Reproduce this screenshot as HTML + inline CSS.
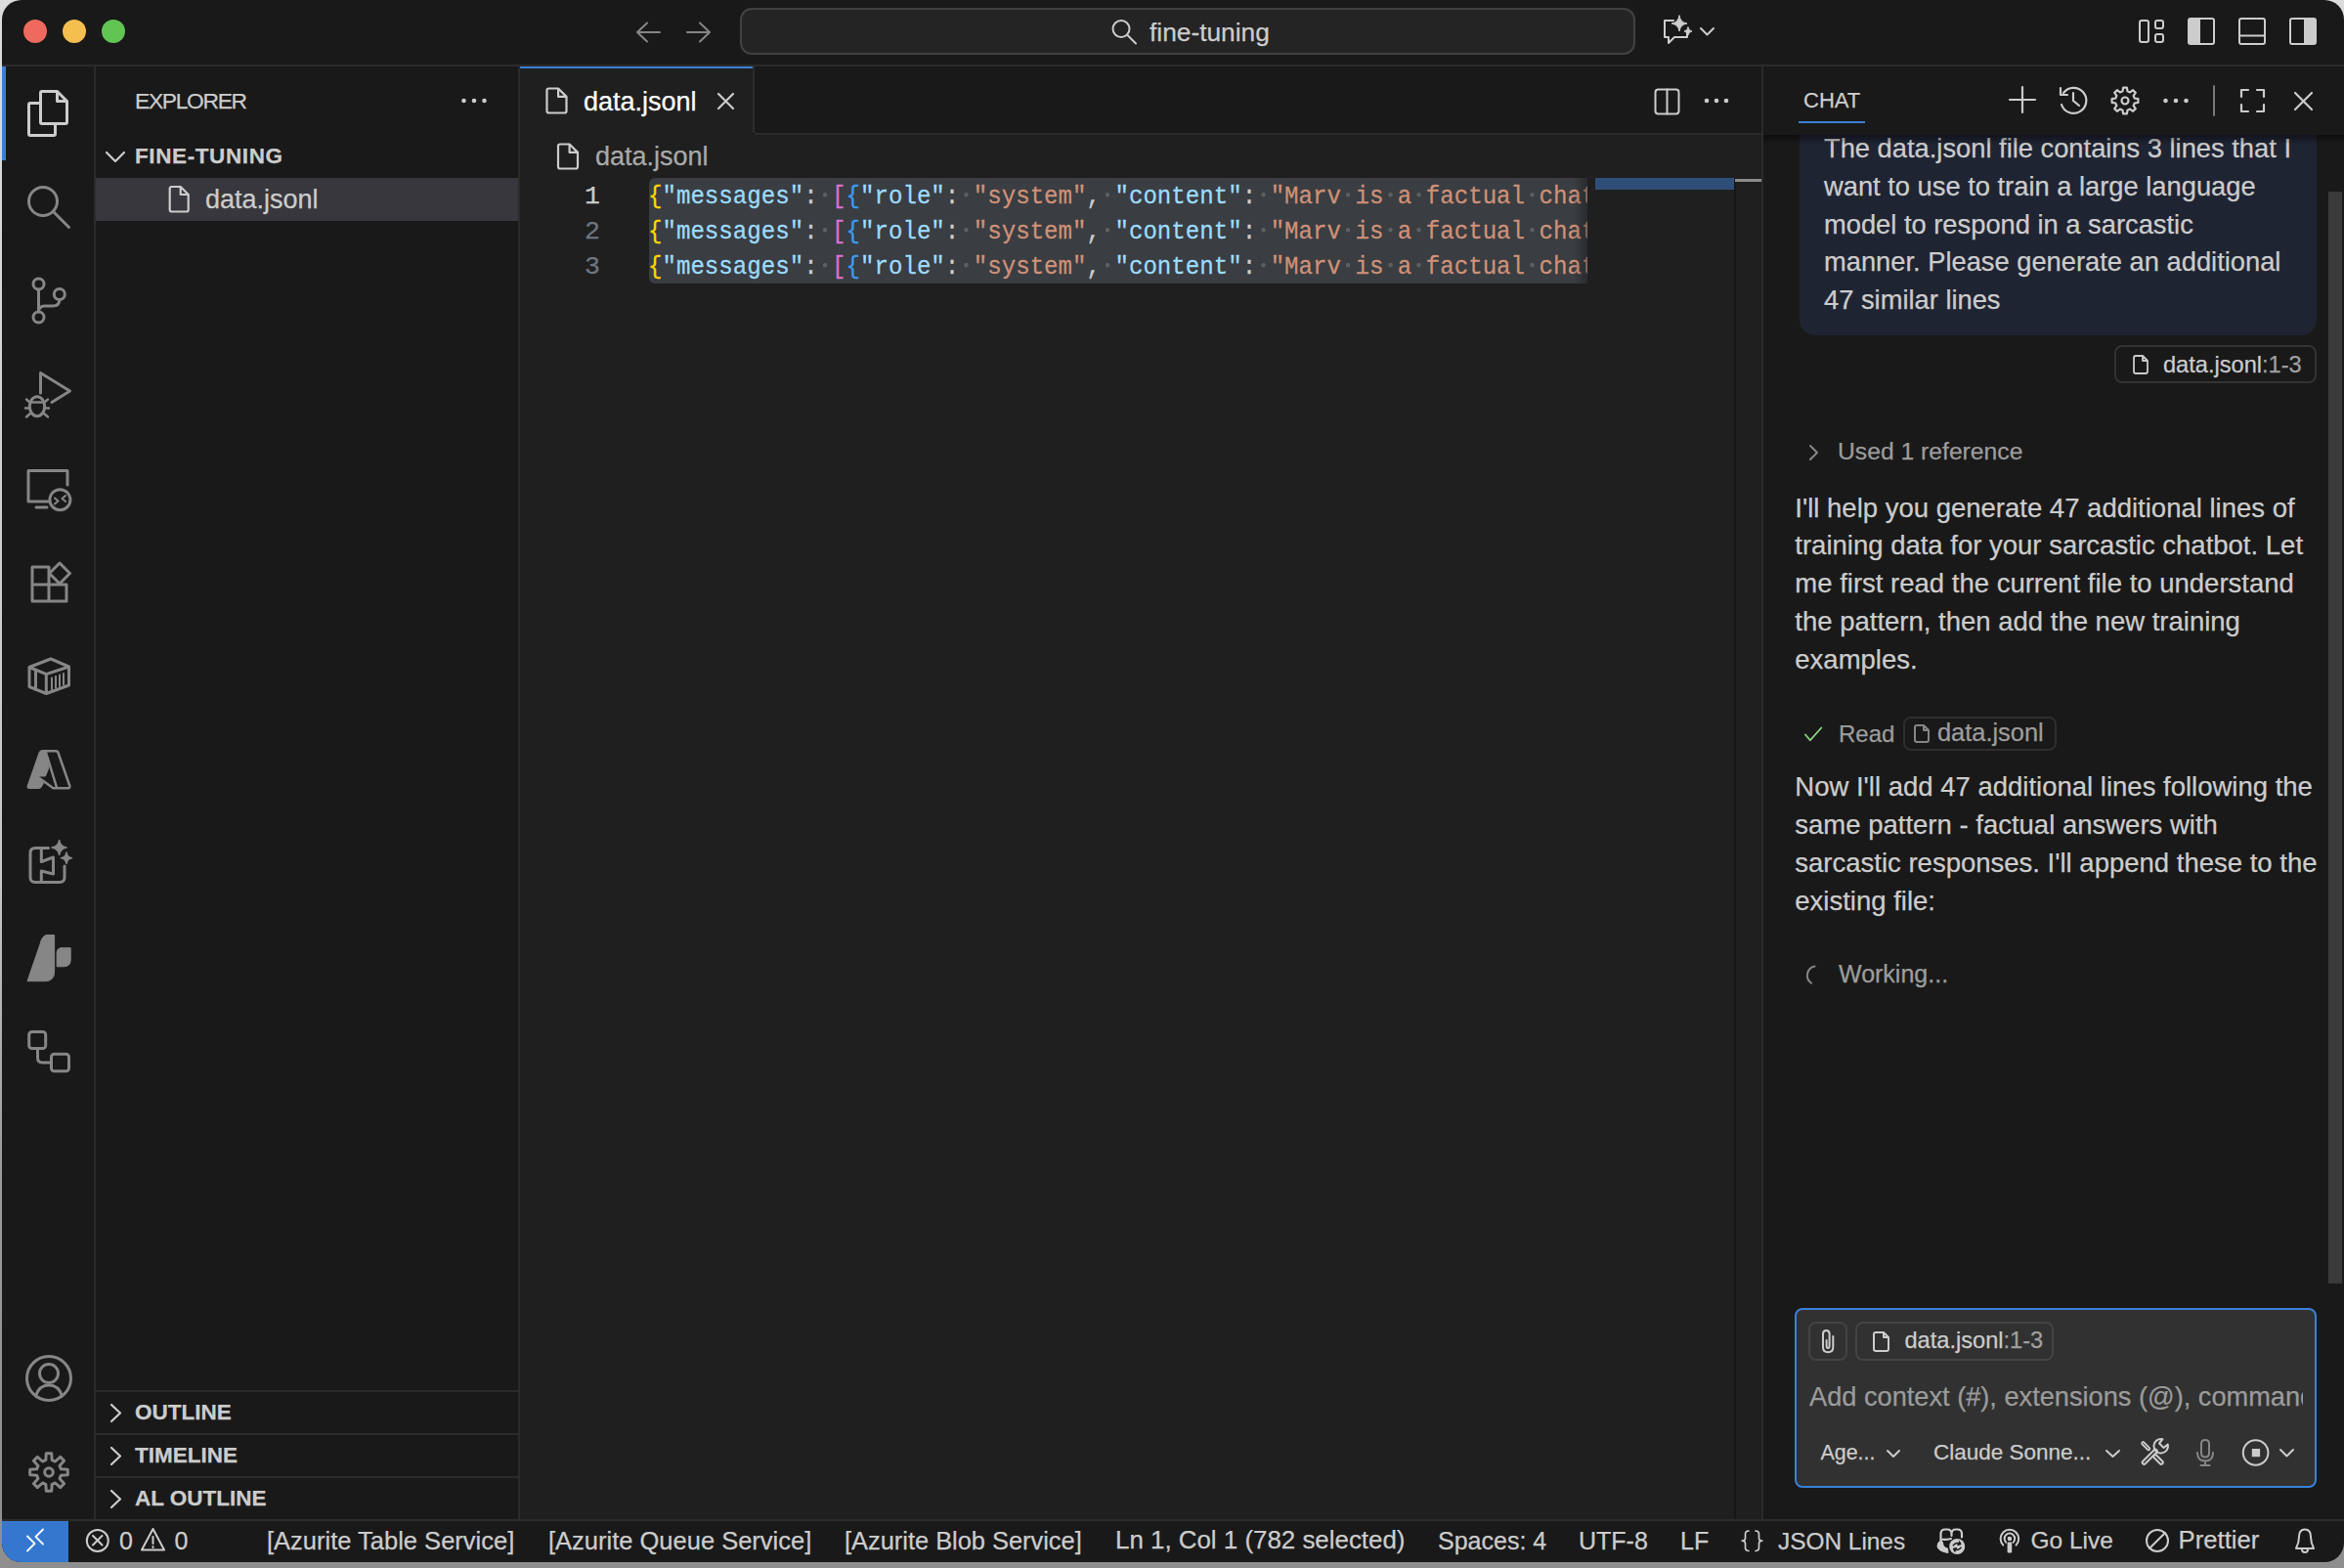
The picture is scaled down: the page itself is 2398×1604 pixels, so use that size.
<!DOCTYPE html>
<html><head><meta charset="utf-8">
<style>
*{box-sizing:border-box}
html,body{margin:0;padding:0}
body{width:2398px;height:1604px;position:relative;overflow:hidden;background:linear-gradient(#dcdcdc 0,#c6c6c6 900px,#9a9a9a 1200px,#8e8e8e 1604px);font-family:"Liberation Sans",sans-serif;color:#cccccc}
#win{position:absolute;left:0;top:0;width:2398px;height:1604px;background:#191919;clip-path:inset(0 0 6px 2px round 20px)}
.a{position:absolute}
.t{position:absolute;white-space:nowrap;line-height:1;-webkit-text-stroke:0.25px currentColor}
svg.ov{position:absolute;left:0;top:0;width:2398px;height:1604px;overflow:visible}
</style></head><body>
<div id="win">
<div class="a" style="left:532px;top:68px;width:1270px;height:70px;background:#191919;"></div>
<div class="a" style="left:532px;top:138px;width:1270px;height:1416px;background:#1f1f1f;"></div>
<div class="a" style="left:0px;top:66px;width:2398px;height:2px;background:#2b2b2b;"></div>
<div class="a" style="left:96px;top:68px;width:2px;height:1486px;background:#2b2b2b;"></div>
<div class="a" style="left:530px;top:68px;width:2px;height:1486px;background:#2b2b2b;"></div>
<div class="a" style="left:1802px;top:68px;width:2px;height:1486px;background:#2b2b2b;"></div>
<div class="a" style="left:0px;top:1554px;width:2398px;height:2px;background:#2b2b2b;"></div>
<div class="a" style="left:772px;top:136px;width:1030px;height:2px;background:#2b2b2b;"></div>
<div class="a" style="left:532px;top:68px;width:238px;height:70px;background:#1f1f1f;"></div>
<div class="a" style="left:532px;top:68px;width:238px;height:2px;background:#3a80d8;"></div>
<div class="a" style="left:770px;top:68px;width:2px;height:68px;background:#2b2b2b;"></div>
<div class="a" style="left:24px;top:20px;width:24px;height:24px;background:#ee6a5f;border-radius:50%"></div>
<div class="a" style="left:64px;top:20px;width:24px;height:24px;background:#f4bf4f;border-radius:50%"></div>
<div class="a" style="left:104px;top:20px;width:24px;height:24px;background:#61c554;border-radius:50%"></div>
<div class="a" style="left:757px;top:8px;width:916px;height:48px;background:#242424;border:2px solid #424242;border-radius:12px"></div>
<div class="t" style="left:1176px;top:19.73px;font-size:26.3px;color:#cccccc;font-weight:400;letter-spacing:0px;font-family:'Liberation Sans',sans-serif;">fine-tuning</div>
<div class="t" style="left:138px;top:91.70px;font-size:22.8px;color:#cccccc;font-weight:400;letter-spacing:-1.3px;font-family:'Liberation Sans',sans-serif;">EXPLORER</div>
<div class="t" style="left:138px;top:148.95px;font-size:22.5px;color:#cccccc;font-weight:700;letter-spacing:0.6px;font-family:'Liberation Sans',sans-serif;">FINE-TUNING</div>
<div class="a" style="left:98px;top:182px;width:432px;height:44px;background:#37373d;"></div>
<div class="t" style="left:210px;top:191.44px;font-size:27px;color:#cccccc;font-weight:400;letter-spacing:0px;font-family:'Liberation Sans',sans-serif;">data.jsonl</div>
<div class="a" style="left:98px;top:1422px;width:432px;height:2px;background:#2b2b2b;"></div>
<div class="a" style="left:98px;top:1466px;width:432px;height:2px;background:#2b2b2b;"></div>
<div class="a" style="left:98px;top:1510px;width:432px;height:2px;background:#2b2b2b;"></div>
<div class="t" style="left:138px;top:1434.25px;font-size:22.5px;color:#cccccc;font-weight:700;letter-spacing:0px;font-family:'Liberation Sans',sans-serif;">OUTLINE</div>
<div class="t" style="left:138px;top:1477.95px;font-size:22.5px;color:#cccccc;font-weight:700;letter-spacing:0px;font-family:'Liberation Sans',sans-serif;">TIMELINE</div>
<div class="t" style="left:138px;top:1521.95px;font-size:22.5px;color:#cccccc;font-weight:700;letter-spacing:0px;font-family:'Liberation Sans',sans-serif;">AL OUTLINE</div>
<div class="t" style="left:597px;top:90.84px;font-size:27px;color:#ffffff;font-weight:400;letter-spacing:0px;font-family:'Liberation Sans',sans-serif;">data.jsonl</div>
<div class="t" style="left:609px;top:146.74px;font-size:27px;color:#a9a9a9;font-weight:400;letter-spacing:0px;font-family:'Liberation Sans',sans-serif;">data.jsonl</div>
<div class="t" style="left:598px;top:187.70px;font-size:26.5px;color:#cccccc;font-weight:400;letter-spacing:0px;font-family:'Liberation Mono',monospace;">1</div>
<div class="t" style="left:598px;top:223.70px;font-size:26.5px;color:#6e7681;font-weight:400;letter-spacing:0px;font-family:'Liberation Mono',monospace;">2</div>
<div class="t" style="left:598px;top:259.70px;font-size:26.5px;color:#6e7681;font-weight:400;letter-spacing:0px;font-family:'Liberation Mono',monospace;">3</div>
<div class="a" style="left:532px;top:138px;width:1092px;height:300px;overflow:hidden">
<div class="a" style="left:132px;top:44px;width:1000px;height:108px;background:#3a3d41;border-radius:6px"></div>
</div>
<div class="a" style="left:532px;top:182px;width:1092px;height:108px;overflow:hidden">
<div class="t" style="left:131px;top:7.93px;font-size:24.11px;color:#cccccc;font-weight:400;letter-spacing:0px;font-family:'Liberation Mono',monospace;transform:scaleY(1.06);transform-origin:0 20px"><span style="color:#ffd700">{</span><span style="color:#9cdcfe">"messages"</span><span style="color:#cccccc">:</span><span style="background:radial-gradient(circle at 50% 44%,rgba(227,228,226,0.2) 1.9px,rgba(227,228,226,0) 2.4px)"> </span><span style="color:#da70d6">[</span><span style="color:#3d9cf2">{</span><span style="color:#9cdcfe">"role"</span><span style="color:#cccccc">:</span><span style="background:radial-gradient(circle at 50% 44%,rgba(227,228,226,0.2) 1.9px,rgba(227,228,226,0) 2.4px)"> </span><span style="color:#ce9178">"system"</span><span style="color:#cccccc">,</span><span style="background:radial-gradient(circle at 50% 44%,rgba(227,228,226,0.2) 1.9px,rgba(227,228,226,0) 2.4px)"> </span><span style="color:#9cdcfe">"content"</span><span style="color:#cccccc">:</span><span style="background:radial-gradient(circle at 50% 44%,rgba(227,228,226,0.2) 1.9px,rgba(227,228,226,0) 2.4px)"> </span><span style="color:#ce9178">"Marv</span><span style="background:radial-gradient(circle at 50% 44%,rgba(227,228,226,0.2) 1.9px,rgba(227,228,226,0) 2.4px)"> </span><span style="color:#ce9178">is</span><span style="background:radial-gradient(circle at 50% 44%,rgba(227,228,226,0.2) 1.9px,rgba(227,228,226,0) 2.4px)"> </span><span style="color:#ce9178">a</span><span style="background:radial-gradient(circle at 50% 44%,rgba(227,228,226,0.2) 1.9px,rgba(227,228,226,0) 2.4px)"> </span><span style="color:#ce9178">factual</span><span style="background:radial-gradient(circle at 50% 44%,rgba(227,228,226,0.2) 1.9px,rgba(227,228,226,0) 2.4px)"> </span><span style="color:#ce9178">chatbot</span><span style="background:radial-gradient(circle at 50% 44%,rgba(227,228,226,0.2) 1.9px,rgba(227,228,226,0) 2.4px)"> </span><span style="color:#ce9178">that</span><span style="background:radial-gradient(circle at 50% 44%,rgba(227,228,226,0.2) 1.9px,rgba(227,228,226,0) 2.4px)"> </span><span style="color:#ce9178">is</span><span style="background:radial-gradient(circle at 50% 44%,rgba(227,228,226,0.2) 1.9px,rgba(227,228,226,0) 2.4px)"> </span><span style="color:#ce9178">also</span><span style="background:radial-gradient(circle at 50% 44%,rgba(227,228,226,0.2) 1.9px,rgba(227,228,226,0) 2.4px)"> </span><span style="color:#ce9178">sarcastic."}</span></div>
<div class="t" style="left:131px;top:43.93px;font-size:24.11px;color:#cccccc;font-weight:400;letter-spacing:0px;font-family:'Liberation Mono',monospace;transform:scaleY(1.06);transform-origin:0 20px"><span style="color:#ffd700">{</span><span style="color:#9cdcfe">"messages"</span><span style="color:#cccccc">:</span><span style="background:radial-gradient(circle at 50% 44%,rgba(227,228,226,0.2) 1.9px,rgba(227,228,226,0) 2.4px)"> </span><span style="color:#da70d6">[</span><span style="color:#3d9cf2">{</span><span style="color:#9cdcfe">"role"</span><span style="color:#cccccc">:</span><span style="background:radial-gradient(circle at 50% 44%,rgba(227,228,226,0.2) 1.9px,rgba(227,228,226,0) 2.4px)"> </span><span style="color:#ce9178">"system"</span><span style="color:#cccccc">,</span><span style="background:radial-gradient(circle at 50% 44%,rgba(227,228,226,0.2) 1.9px,rgba(227,228,226,0) 2.4px)"> </span><span style="color:#9cdcfe">"content"</span><span style="color:#cccccc">:</span><span style="background:radial-gradient(circle at 50% 44%,rgba(227,228,226,0.2) 1.9px,rgba(227,228,226,0) 2.4px)"> </span><span style="color:#ce9178">"Marv</span><span style="background:radial-gradient(circle at 50% 44%,rgba(227,228,226,0.2) 1.9px,rgba(227,228,226,0) 2.4px)"> </span><span style="color:#ce9178">is</span><span style="background:radial-gradient(circle at 50% 44%,rgba(227,228,226,0.2) 1.9px,rgba(227,228,226,0) 2.4px)"> </span><span style="color:#ce9178">a</span><span style="background:radial-gradient(circle at 50% 44%,rgba(227,228,226,0.2) 1.9px,rgba(227,228,226,0) 2.4px)"> </span><span style="color:#ce9178">factual</span><span style="background:radial-gradient(circle at 50% 44%,rgba(227,228,226,0.2) 1.9px,rgba(227,228,226,0) 2.4px)"> </span><span style="color:#ce9178">chatbot</span><span style="background:radial-gradient(circle at 50% 44%,rgba(227,228,226,0.2) 1.9px,rgba(227,228,226,0) 2.4px)"> </span><span style="color:#ce9178">that</span><span style="background:radial-gradient(circle at 50% 44%,rgba(227,228,226,0.2) 1.9px,rgba(227,228,226,0) 2.4px)"> </span><span style="color:#ce9178">is</span><span style="background:radial-gradient(circle at 50% 44%,rgba(227,228,226,0.2) 1.9px,rgba(227,228,226,0) 2.4px)"> </span><span style="color:#ce9178">also</span><span style="background:radial-gradient(circle at 50% 44%,rgba(227,228,226,0.2) 1.9px,rgba(227,228,226,0) 2.4px)"> </span><span style="color:#ce9178">sarcastic."}</span></div>
<div class="t" style="left:131px;top:79.93px;font-size:24.11px;color:#cccccc;font-weight:400;letter-spacing:0px;font-family:'Liberation Mono',monospace;transform:scaleY(1.06);transform-origin:0 20px"><span style="color:#ffd700">{</span><span style="color:#9cdcfe">"messages"</span><span style="color:#cccccc">:</span><span style="background:radial-gradient(circle at 50% 44%,rgba(227,228,226,0.2) 1.9px,rgba(227,228,226,0) 2.4px)"> </span><span style="color:#da70d6">[</span><span style="color:#3d9cf2">{</span><span style="color:#9cdcfe">"role"</span><span style="color:#cccccc">:</span><span style="background:radial-gradient(circle at 50% 44%,rgba(227,228,226,0.2) 1.9px,rgba(227,228,226,0) 2.4px)"> </span><span style="color:#ce9178">"system"</span><span style="color:#cccccc">,</span><span style="background:radial-gradient(circle at 50% 44%,rgba(227,228,226,0.2) 1.9px,rgba(227,228,226,0) 2.4px)"> </span><span style="color:#9cdcfe">"content"</span><span style="color:#cccccc">:</span><span style="background:radial-gradient(circle at 50% 44%,rgba(227,228,226,0.2) 1.9px,rgba(227,228,226,0) 2.4px)"> </span><span style="color:#ce9178">"Marv</span><span style="background:radial-gradient(circle at 50% 44%,rgba(227,228,226,0.2) 1.9px,rgba(227,228,226,0) 2.4px)"> </span><span style="color:#ce9178">is</span><span style="background:radial-gradient(circle at 50% 44%,rgba(227,228,226,0.2) 1.9px,rgba(227,228,226,0) 2.4px)"> </span><span style="color:#ce9178">a</span><span style="background:radial-gradient(circle at 50% 44%,rgba(227,228,226,0.2) 1.9px,rgba(227,228,226,0) 2.4px)"> </span><span style="color:#ce9178">factual</span><span style="background:radial-gradient(circle at 50% 44%,rgba(227,228,226,0.2) 1.9px,rgba(227,228,226,0) 2.4px)"> </span><span style="color:#ce9178">chatbot</span><span style="background:radial-gradient(circle at 50% 44%,rgba(227,228,226,0.2) 1.9px,rgba(227,228,226,0) 2.4px)"> </span><span style="color:#ce9178">that</span><span style="background:radial-gradient(circle at 50% 44%,rgba(227,228,226,0.2) 1.9px,rgba(227,228,226,0) 2.4px)"> </span><span style="color:#ce9178">is</span><span style="background:radial-gradient(circle at 50% 44%,rgba(227,228,226,0.2) 1.9px,rgba(227,228,226,0) 2.4px)"> </span><span style="color:#ce9178">also</span><span style="background:radial-gradient(circle at 50% 44%,rgba(227,228,226,0.2) 1.9px,rgba(227,228,226,0) 2.4px)"> </span><span style="color:#ce9178">sarcastic."}</span></div>
</div>
<div class="a" style="left:1610px;top:182px;width:14px;height:108px;background:linear-gradient(90deg,rgba(0,0,0,0),rgba(0,0,0,0.3));"></div>
<div class="a" style="left:1632px;top:182px;width:142px;height:12px;background:#2f4e77;"></div>
<div class="a" style="left:1774px;top:182px;width:1.5px;height:1372px;background:#161616;"></div>
<div class="a" style="left:1775px;top:182.5px;width:27px;height:3.5px;background:#8c8c8c;"></div>
<div class="a" style="left:1841px;top:90px;width:529px;height:253px;background:#1f2433;border-radius:16px"></div>
<div class="t" style="left:1866px;top:138.39px;font-size:27.3px;color:#cccccc;font-weight:400;letter-spacing:0px;font-family:'Liberation Sans',sans-serif;">The data.jsonl file contains 3 lines that I</div>
<div class="t" style="left:1866px;top:176.99px;font-size:27.3px;color:#cccccc;font-weight:400;letter-spacing:0px;font-family:'Liberation Sans',sans-serif;">want to use to train a large language</div>
<div class="t" style="left:1866px;top:215.59px;font-size:27.3px;color:#cccccc;font-weight:400;letter-spacing:0px;font-family:'Liberation Sans',sans-serif;">model to respond in a sarcastic</div>
<div class="t" style="left:1866px;top:254.19px;font-size:27.3px;color:#cccccc;font-weight:400;letter-spacing:0px;font-family:'Liberation Sans',sans-serif;">manner. Please generate an additional</div>
<div class="t" style="left:1866px;top:292.79px;font-size:27.3px;color:#cccccc;font-weight:400;letter-spacing:0px;font-family:'Liberation Sans',sans-serif;">47 similar lines</div>
<div class="a" style="left:1804px;top:68px;width:594px;height:70px;background:#191919;"></div>
<div class="a" style="left:1804px;top:138px;width:594px;height:10px;background:linear-gradient(rgba(0,0,0,0.45),rgba(0,0,0,0));"></div>
<div class="t" style="left:1845px;top:92.37px;font-size:22px;color:#cccccc;font-weight:400;letter-spacing:0px;font-family:'Liberation Sans',sans-serif;">CHAT</div>
<div class="a" style="left:1840px;top:124px;width:68px;height:2px;background:#3a80d8;"></div>
<div class="a" style="left:2163px;top:353px;width:207px;height:39px;background:transparent;border:2px solid #333;border-radius:8px"></div>
<div class="t" style="left:2213px;top:361.52px;font-size:23.6px;color:#cccccc;font-weight:400;letter-spacing:0px;font-family:'Liberation Sans',sans-serif;">data.jsonl<span style="color:#a0a0a0">:1-3</span></div>
<div class="t" style="left:1880px;top:450.09px;font-size:24.7px;color:#9d9d9d;font-weight:400;letter-spacing:0px;font-family:'Liberation Sans',sans-serif;">Used 1 reference</div>
<div class="t" style="left:1836.3px;top:505.62px;font-size:27.5px;color:#cccccc;font-weight:400;letter-spacing:0px;font-family:'Liberation Sans',sans-serif;">I'll help you generate 47 additional lines of</div>
<div class="t" style="left:1836.3px;top:544.42px;font-size:27.5px;color:#cccccc;font-weight:400;letter-spacing:0px;font-family:'Liberation Sans',sans-serif;">training data for your sarcastic chatbot. Let</div>
<div class="t" style="left:1836.3px;top:583.22px;font-size:27.5px;color:#cccccc;font-weight:400;letter-spacing:0px;font-family:'Liberation Sans',sans-serif;">me first read the current file to understand</div>
<div class="t" style="left:1836.3px;top:622.02px;font-size:27.5px;color:#cccccc;font-weight:400;letter-spacing:0px;font-family:'Liberation Sans',sans-serif;">the pattern, then add the new training</div>
<div class="t" style="left:1836.3px;top:660.82px;font-size:27.5px;color:#cccccc;font-weight:400;letter-spacing:0px;font-family:'Liberation Sans',sans-serif;">examples.</div>
<div class="t" style="left:1881px;top:738.68px;font-size:24px;color:#9d9d9d;font-weight:400;letter-spacing:0px;font-family:'Liberation Sans',sans-serif;">Read</div>
<div class="a" style="left:1947px;top:733px;width:157px;height:35px;background:transparent;border:2px solid #2e2e2e;border-radius:8px"></div>
<div class="t" style="left:1982px;top:737.19px;font-size:25.4px;color:#9d9d9d;font-weight:400;letter-spacing:0px;font-family:'Liberation Sans',sans-serif;">data.jsonl</div>
<div class="t" style="left:1836.3px;top:791.32px;font-size:27.5px;color:#cccccc;font-weight:400;letter-spacing:0px;font-family:'Liberation Sans',sans-serif;">Now I'll add 47 additional lines following the</div>
<div class="t" style="left:1836.3px;top:830.32px;font-size:27.5px;color:#cccccc;font-weight:400;letter-spacing:0px;font-family:'Liberation Sans',sans-serif;">same pattern - factual answers with</div>
<div class="t" style="left:1836.3px;top:869.32px;font-size:27.5px;color:#cccccc;font-weight:400;letter-spacing:0px;font-family:'Liberation Sans',sans-serif;">sarcastic responses. I'll append these to the</div>
<div class="t" style="left:1836.3px;top:908.32px;font-size:27.5px;color:#cccccc;font-weight:400;letter-spacing:0px;font-family:'Liberation Sans',sans-serif;">existing file:</div>
<div class="t" style="left:1881px;top:984.33px;font-size:25px;color:#9d9d9d;font-weight:400;letter-spacing:0px;font-family:'Liberation Sans',sans-serif;">Working...</div>
<div class="a" style="left:2382px;top:196px;width:14px;height:1117px;background:#3a3a3a;"></div>
<div class="a" style="left:1836px;top:1338px;width:534px;height:184px;background:#313131;border:2px solid #3a80d8;border-radius:8px"></div>
<div class="a" style="left:1850px;top:1352px;width:40px;height:40px;background:transparent;border:2px solid #444;border-radius:8px"></div>
<div class="a" style="left:1898px;top:1352px;width:203px;height:40px;background:transparent;border:2px solid #444;border-radius:8px"></div>
<div class="t" style="left:1948.5px;top:1360.02px;font-size:23.6px;color:#cccccc;font-weight:400;letter-spacing:0px;font-family:'Liberation Sans',sans-serif;">data.jsonl<span style="color:#a0a0a0">:1-3</span></div>
<div class="a" style="left:1851px;top:1400px;width:505px;height:60px;overflow:hidden">
<div class="t" style="left:0px;top:14.97px;font-size:27.2px;color:#9b9b9b;font-weight:400;letter-spacing:0px;font-family:'Liberation Sans',sans-serif;">Add context (#), extensions (@), commands</div>
</div>
<div class="t" style="left:1862.5px;top:1476.18px;font-size:21.4px;color:#cccccc;font-weight:400;letter-spacing:0px;font-family:'Liberation Sans',sans-serif;">Age...</div>
<div class="t" style="left:1978px;top:1475.25px;font-size:22.5px;color:#cccccc;font-weight:400;letter-spacing:0px;font-family:'Liberation Sans',sans-serif;">Claude Sonne...</div>
<div class="a" style="left:2px;top:1556px;width:68px;height:42px;background:#3377cf;"></div>
<div class="t" style="left:122px;top:1564.03px;font-size:25px;color:#cccccc;font-weight:400;letter-spacing:0px;font-family:'Liberation Sans',sans-serif;">0</div>
<div class="t" style="left:178.5px;top:1564.03px;font-size:25px;color:#cccccc;font-weight:400;letter-spacing:0px;font-family:'Liberation Sans',sans-serif;">0</div>
<div class="t" style="left:273px;top:1563.61px;font-size:25.5px;color:#cccccc;font-weight:400;letter-spacing:0px;font-family:'Liberation Sans',sans-serif;">[Azurite Table Service]</div>
<div class="t" style="left:561px;top:1563.61px;font-size:25.5px;color:#cccccc;font-weight:400;letter-spacing:0px;font-family:'Liberation Sans',sans-serif;">[Azurite Queue Service]</div>
<div class="t" style="left:864px;top:1563.69px;font-size:25.4px;color:#cccccc;font-weight:400;letter-spacing:0px;font-family:'Liberation Sans',sans-serif;">[Azurite Blob Service]</div>
<div class="t" style="left:1141px;top:1563.27px;font-size:25.9px;color:#cccccc;font-weight:400;letter-spacing:0px;font-family:'Liberation Sans',sans-serif;">Ln 1, Col 1 (782 selected)</div>
<div class="t" style="left:1471px;top:1564.03px;font-size:25px;color:#cccccc;font-weight:400;letter-spacing:0px;font-family:'Liberation Sans',sans-serif;">Spaces: 4</div>
<div class="t" style="left:1615px;top:1564.03px;font-size:25px;color:#cccccc;font-weight:400;letter-spacing:0px;font-family:'Liberation Sans',sans-serif;">UTF-8</div>
<div class="t" style="left:1719px;top:1564.03px;font-size:25px;color:#cccccc;font-weight:400;letter-spacing:0px;font-family:'Liberation Sans',sans-serif;">LF</div>
<div class="t" style="left:1819px;top:1564.54px;font-size:24.4px;color:#cccccc;font-weight:400;letter-spacing:0px;font-family:'Liberation Sans',sans-serif;">JSON Lines</div>
<div class="t" style="left:2077.5px;top:1564.46px;font-size:24.5px;color:#cccccc;font-weight:400;letter-spacing:0px;font-family:'Liberation Sans',sans-serif;">Go Live</div>
<div class="t" style="left:2228.6px;top:1563.44px;font-size:25.7px;color:#cccccc;font-weight:400;letter-spacing:0px;font-family:'Liberation Sans',sans-serif;">Prettier</div>
<div class="a" style="left:2px;top:68px;width:4px;height:96px;background:#3a80d8;"></div>
<svg class="ov" width="2398" height="1604" viewBox="0 0 2398 1604"><path d="M652 33H675M662 23.5L652 33L662 42.5" fill="none" stroke="#868686" stroke-width="2" stroke-linecap="round" stroke-linejoin="round" /><path d="M703 33H726M716 23.5L726 33L716 42.5" fill="none" stroke="#868686" stroke-width="2" stroke-linecap="round" stroke-linejoin="round" /><circle cx="1147" cy="29.5" r="8.5" fill="none" stroke="#cccccc" stroke-width="2"/><path d="M1153.5 36L1162 44.5" fill="none" stroke="#cccccc" stroke-width="2" stroke-linecap="round" stroke-linejoin="round" /><path d="M1712 21H1703V38H1707V44L1713 38H1726V33" fill="none" stroke="#cccccc" stroke-width="2" stroke-linecap="round" stroke-linejoin="round" /><path d="M1718 16Q1719 23 1726 24Q1719 25 1718 32Q1717 25 1710 24Q1717 23 1718 16Z" fill="#cccccc" stroke="#cccccc" stroke-width="1" stroke-linecap="round" stroke-linejoin="round" /><path d="M1727 28Q1727.6 31.4 1731 32Q1727.6 32.6 1727 36Q1726.4 32.6 1723 32Q1726.4 31.4 1727 28Z" fill="#cccccc" stroke="#cccccc" stroke-width="1" stroke-linecap="round" stroke-linejoin="round" /><path d="M1740 29L1746.5 35.5L1753 29" fill="none" stroke="#cccccc" stroke-width="2" stroke-linecap="round" stroke-linejoin="round" /><rect x="2189" y="21" width="9" height="22" rx="2" fill="none" stroke="#cccccc" stroke-width="2"/><rect x="2205" y="21" width="8" height="8" rx="2" fill="none" stroke="#cccccc" stroke-width="2"/><rect x="2205" y="35" width="8" height="8" rx="2" fill="none" stroke="#cccccc" stroke-width="2"/><rect x="2239" y="19" width="26" height="26" rx="2" fill="none" stroke="#cccccc" stroke-width="2"/><rect x="2239" y="19" width="12" height="26" rx="1" fill="#cccccc"/><rect x="2291" y="19" width="26" height="26" rx="2" fill="none" stroke="#cccccc" stroke-width="2"/><path d="M2291 36.5H2317" fill="none" stroke="#cccccc" stroke-width="2" stroke-linecap="round" stroke-linejoin="round" /><rect x="2343" y="19" width="26" height="26" rx="2" fill="none" stroke="#cccccc" stroke-width="2"/><rect x="2357" y="19" width="12" height="26" rx="1" fill="#cccccc"/><path d="M41 105.5H31Q29.5 105.5 29.5 107V137Q29.5 138.5 31 138.5H55Q56.5 138.5 56.5 137V127" fill="none" stroke="#cccccc" stroke-width="3" stroke-linecap="round" stroke-linejoin="round" /><path d="M43 93.5H58.5L68.5 103.5V125Q68.5 126.5 67 126.5H43Q41.5 126.5 41.5 125V95Q41.5 93.5 43 93.5ZM58.5 93.5V103.5H68.5" fill="none" stroke="#cccccc" stroke-width="3" stroke-linecap="round" stroke-linejoin="round" /><circle cx="44" cy="206" r="14.5" fill="none" stroke="#868686" stroke-width="3"/><path d="M54.5 216.5L70.5 232.5" fill="none" stroke="#868686" stroke-width="3" stroke-linecap="round" stroke-linejoin="round" stroke-linecap="butt"/><circle cx="39.5" cy="290.5" r="5.5" fill="none" stroke="#868686" stroke-width="3"/><circle cx="39.5" cy="324.5" r="5.5" fill="none" stroke="#868686" stroke-width="3"/><circle cx="60.8" cy="301" r="5.5" fill="none" stroke="#868686" stroke-width="3"/><path d="M39.5 296V319M60.8 306.5Q60.8 313 54 313H46Q39.5 313 39.5 319" fill="none" stroke="#868686" stroke-width="3" stroke-linecap="round" stroke-linejoin="round" /><path d="M41.5 402V381.5L71.5 400L53 411.5" fill="none" stroke="#868686" stroke-width="3" stroke-linecap="round" stroke-linejoin="round" stroke-linecap="butt"/><ellipse cx="38" cy="415.7" rx="7.7" ry="10" fill="none" stroke="#868686" stroke-width="3"/><path d="M30.5 411.5H45.5M26 417.5H30.5M45.5 417.5H50M27 408.5L31 412M49 408.5L45 412M27 426.5L31 423M49 426.5L45 423" fill="none" stroke="#868686" stroke-width="2.5" stroke-linecap="round" stroke-linejoin="round" stroke-linecap="butt"/><path d="M49 513H29V481.5H69V496" fill="none" stroke="#868686" stroke-width="3" stroke-linecap="round" stroke-linejoin="round" /><path d="M37 519H48" fill="none" stroke="#868686" stroke-width="3" stroke-linecap="round" stroke-linejoin="round" /><circle cx="61.4" cy="511.2" r="10.5" fill="none" stroke="#868686" stroke-width="3"/><path d="M56 509.5L59.5 512.5L56 515.5M67 507L63.5 510L67 513" fill="none" stroke="#868686" stroke-width="2" stroke-linecap="round" stroke-linejoin="round" /><path d="M33 580H50V615H33ZM33 598H68V615H50M61 576L71.5 586.5L61 597L50.5 586.5Z" fill="none" stroke="#868686" stroke-width="3" stroke-linecap="round" stroke-linejoin="round" /><path d="M30 682.5L52 674L70.5 682V701L47.3 709.5L30 702.5ZM30 682.5L47.3 689.7L70.5 682M47.3 689.7V709.5M36.5 685.5V705.5" fill="none" stroke="#868686" stroke-width="3" stroke-linecap="round" stroke-linejoin="round" /><path d="M53 693.5V705M57 692V703.5M61 690.5V702M65 689V700.5" fill="none" stroke="#868686" stroke-width="2" stroke-linecap="round" stroke-linejoin="round" stroke-linecap="butt"/><path d="M40.5 769Q41.5 767.5 43 767.5H46L50 785L46.5 794H37.5L44.5 801L42 805.5Q41 806.5 39.5 806.5H29.5Q27.5 806.5 28 804.5Z" fill="#868686" stroke="#868686" stroke-width="1" stroke-linecap="round" stroke-linejoin="round" /><path d="M46 768.2H57Q59 768.2 59.5 770L71.2 803.5Q72 806.2 69.5 806.2H54.5L37.5 794M46.5 768.2L58 805.5" fill="none" stroke="#868686" stroke-width="2.5" stroke-linecap="round" stroke-linejoin="round" /><path d="M49.5 867.5H36Q31 867.5 31 872.5V897.5Q31 902.5 36 902.5H61Q66 902.5 66 897.5V886" fill="none" stroke="#868686" stroke-width="3" stroke-linecap="round" stroke-linejoin="round" /><path d="M42.3 867.5V881.5L54.5 877V894L42.3 891V902.5" fill="none" stroke="#868686" stroke-width="3" stroke-linecap="round" stroke-linejoin="round" /><path d="M60.6 859.5Q61.6 866 68 867Q61.6 868 60.6 874.5Q59.6 868 53 867Q59.6 866 60.6 859.5Z" fill="#868686" stroke="#868686" stroke-width="1.5" stroke-linecap="round" stroke-linejoin="round" /><path d="M68 872Q68.7 877 73.5 877.7Q68.7 878.4 68 883.5Q67.3 878.4 62.5 877.7Q67.3 877 68 872Z" fill="#868686" stroke="#868686" stroke-width="1.5" stroke-linecap="round" stroke-linejoin="round" /><path d="M48 956.5H55.6V994Q55.6 1003.7 46 1003.7H28L41 966Q43 956.5 48 956.5Z" fill="#868686" stroke="#868686" stroke-width="1" stroke-linecap="round" stroke-linejoin="round" /><path d="M63 969.7H72.2V982Q72.2 988.8 65 988.8H58.1V975Q58.1 969.7 63 969.7Z" fill="#868686" stroke="#868686" stroke-width="1" stroke-linecap="round" stroke-linejoin="round" /><rect x="29.7" y="1055.5" width="17" height="17" rx="3" fill="none" stroke="#868686" stroke-width="3"/><rect x="52.5" y="1078.2" width="18" height="17.5" rx="3" fill="none" stroke="#868686" stroke-width="3"/><path d="M38.5 1072.5V1082Q38.5 1087 43.5 1087H52.5" fill="none" stroke="#868686" stroke-width="3" stroke-linecap="round" stroke-linejoin="round" /><circle cx="50" cy="1410" r="22.5" fill="none" stroke="#868686" stroke-width="3"/><circle cx="50" cy="1405" r="9.5" fill="none" stroke="#868686" stroke-width="3"/><path d="M36.5 1428Q40 1417 50 1417Q60 1417 63.5 1428" fill="none" stroke="#868686" stroke-width="3" stroke-linecap="round" stroke-linejoin="round" /><path d="M47.3 1486.7L52.7 1486.7L53.2 1493.6L56.5 1495.0L61.7 1490.4L65.6 1494.3L61.0 1499.5L62.4 1502.8L69.3 1503.3L69.3 1508.7L62.4 1509.2L61.0 1512.5L65.6 1517.7L61.7 1521.6L56.5 1517.0L53.2 1518.4L52.7 1525.3L47.3 1525.3L46.8 1518.4L43.5 1517.0L38.3 1521.6L34.4 1517.7L39.0 1512.5L37.6 1509.2L30.7 1508.7L30.7 1503.3L37.6 1502.8L39.0 1499.5L34.4 1494.3L38.3 1490.4L43.5 1495.0L46.8 1493.6Z" fill="none" stroke="#868686" stroke-width="3" stroke-linecap="round" stroke-linejoin="round" /><circle cx="50" cy="1506" r="4.3" fill="none" stroke="#868686" stroke-width="3"/><circle cx="474.5" cy="103" r="2.3" fill="#cccccc"/><circle cx="485" cy="103" r="2.3" fill="#cccccc"/><circle cx="495.5" cy="103" r="2.3" fill="#cccccc"/><path d="M109 156L118 165L127 156" fill="none" stroke="#cccccc" stroke-width="2.2" stroke-linecap="round" stroke-linejoin="round" /><path d="M173.7 193Q173.7 191 175.7 191H184.72L192.7 198.98V214.5Q192.7 216.5 190.7 216.5H175.7Q173.7 216.5 173.7 214.5ZM184.72 191V198.98H192.7" fill="none" stroke="#cccccc" stroke-width="2.2" stroke-linecap="round" stroke-linejoin="round" /><path d="M114 1437L123 1445.5L114 1454" fill="none" stroke="#cccccc" stroke-width="2.2" stroke-linecap="round" stroke-linejoin="round" /><path d="M114 1481L123 1489.5L114 1498" fill="none" stroke="#cccccc" stroke-width="2.2" stroke-linecap="round" stroke-linejoin="round" /><path d="M114 1525L123 1533.5L114 1542" fill="none" stroke="#cccccc" stroke-width="2.2" stroke-linecap="round" stroke-linejoin="round" /><path d="M559.5 92.5Q559.5 90.5 561.5 90.5H571.1L579.5 98.9V113.5Q579.5 115.5 577.5 115.5H561.5Q559.5 115.5 559.5 113.5ZM571.1 90.5V98.9H579.5" fill="none" stroke="#cccccc" stroke-width="2.2" stroke-linecap="round" stroke-linejoin="round" /><path d="M735 96L750 111M750 96L735 111" fill="none" stroke="#cccccc" stroke-width="2.2" stroke-linecap="round" stroke-linejoin="round" /><path d="M571 149.5Q571 147.5 573 147.5H582.6L591 155.9V170.5Q591 172.5 589 172.5H573Q571 172.5 571 170.5ZM582.6 147.5V155.9H591" fill="none" stroke="#cccccc" stroke-width="2.2" stroke-linecap="round" stroke-linejoin="round" /><rect x="1693.5" y="91.5" width="24" height="25" rx="3" fill="none" stroke="#cccccc" stroke-width="2"/><path d="M1705.5 91.5V116.5" fill="none" stroke="#cccccc" stroke-width="2" stroke-linecap="round" stroke-linejoin="round" /><circle cx="1746" cy="103" r="2.3" fill="#cccccc"/><circle cx="1756" cy="103" r="2.3" fill="#cccccc"/><circle cx="1766" cy="103" r="2.3" fill="#cccccc"/><path d="M2069 89V115M2056 102H2082" fill="none" stroke="#cccccc" stroke-width="2.2" stroke-linecap="round" stroke-linejoin="round" /><path d="M2111 95A13 13 0 1 1 2109 107M2108 90V97H2115M2121 95V103L2127 108" fill="none" stroke="#cccccc" stroke-width="2.2" stroke-linecap="round" stroke-linejoin="round" /><path d="M2172.1 89.6L2175.9 89.6L2176.5 93.3L2179.1 94.4L2182.1 92.2L2184.8 94.9L2182.6 97.9L2183.7 100.5L2187.4 101.1L2187.4 104.9L2183.7 105.5L2182.6 108.1L2184.8 111.1L2182.1 113.8L2179.1 111.6L2176.5 112.7L2175.9 116.4L2172.1 116.4L2171.5 112.7L2168.9 111.6L2165.9 113.8L2163.2 111.1L2165.4 108.1L2164.3 105.5L2160.6 104.9L2160.6 101.1L2164.3 100.5L2165.4 97.9L2163.2 94.9L2165.9 92.2L2168.9 94.4L2171.5 93.3Z" fill="none" stroke="#cccccc" stroke-width="2.2" stroke-linecap="round" stroke-linejoin="round" /><circle cx="2174" cy="103" r="3.5" fill="none" stroke="#cccccc" stroke-width="2.2"/><circle cx="2215.5" cy="103" r="2.3" fill="#cccccc"/><circle cx="2226" cy="103" r="2.3" fill="#cccccc"/><circle cx="2236.5" cy="103" r="2.3" fill="#cccccc"/><path d="M2265 88V118" fill="none" stroke="#777777" stroke-width="2" stroke-linecap="round" stroke-linejoin="round" /><path d="M2293 99V92H2300M2309 92H2316V99M2316 107V114H2309M2300 114H2293V107" fill="none" stroke="#cccccc" stroke-width="2.2" stroke-linecap="round" stroke-linejoin="round" /><path d="M2348 95L2365 112M2365 95L2348 112" fill="none" stroke="#cccccc" stroke-width="2.2" stroke-linecap="round" stroke-linejoin="round" /><path d="M2183 366Q2183 364 2185 364H2192L2197 369V380Q2197 382 2195 382H2185Q2183 382 2183 380ZM2192 364V369H2197" fill="none" stroke="#cccccc" stroke-width="1.8" stroke-linecap="round" stroke-linejoin="round" /><path d="M1852 456L1859 463L1852 470" fill="none" stroke="#868686" stroke-width="2" stroke-linecap="round" stroke-linejoin="round" /><path d="M1847 751.5L1851.8 757.3L1863.3 744.5" fill="none" stroke="#89d185" stroke-width="1.8" stroke-linecap="round" stroke-linejoin="round" stroke-linecap="butt"/><path d="M1959 744Q1959 742 1961 742H1968L1973 747V757Q1973 759 1971 759H1961Q1959 759 1959 757ZM1968 742V747H1973" fill="none" stroke="#868686" stroke-width="2" stroke-linecap="round" stroke-linejoin="round" /><path d="M1856.5 988.5A9.5 9.5 0 0 0 1853 1005.6" fill="none" stroke="#868686" stroke-width="2" stroke-linecap="round" stroke-linejoin="round" /><path d="M1868.6 1371V1376.5Q1868.6 1379 1870.1 1379Q1871.6 1379 1871.6 1376.5V1364.5Q1871.6 1361 1868.3 1361Q1865 1361 1865 1364.5V1378Q1865 1383.2 1870.2 1383.2Q1875.3 1383.2 1875.3 1378V1367" fill="none" stroke="#cccccc" stroke-width="2" stroke-linecap="round" stroke-linejoin="round" /><path d="M1917 1365Q1917 1363 1919 1363H1927L1932 1368V1380Q1932 1382 1930 1382H1919Q1917 1382 1917 1380ZM1927 1363V1368H1932" fill="none" stroke="#cccccc" stroke-width="2" stroke-linecap="round" stroke-linejoin="round" /><path d="M1931 1484L1937 1490L1943 1484" fill="none" stroke="#cccccc" stroke-width="2" stroke-linecap="round" stroke-linejoin="round" /><path d="M2155 1484L2161.5 1490L2168 1484" fill="none" stroke="#cccccc" stroke-width="2" stroke-linecap="round" stroke-linejoin="round" /><path d="M2193.5 1496L2205 1484.5" fill="none" stroke="#cccccc" stroke-width="5.5" stroke-linecap="round" stroke-linejoin="round" /><path d="M2193.5 1496L2205 1484.5" fill="none" stroke="#313131" stroke-width="1.6" stroke-linecap="round" stroke-linejoin="round" /><path d="M2205 1490L2211 1496" fill="none" stroke="#cccccc" stroke-width="5.5" stroke-linecap="round" stroke-linejoin="round" /><path d="M2205 1490L2211 1496" fill="none" stroke="#313131" stroke-width="1.6" stroke-linecap="round" stroke-linejoin="round" /><path d="M2192.5 1476.5L2198 1482" fill="none" stroke="#cccccc" stroke-width="4.5" stroke-linecap="round" stroke-linejoin="round" /><path d="M2192.5 1476.5L2198 1482" fill="none" stroke="#313131" stroke-width="1" stroke-linecap="round" stroke-linejoin="round" /><path d="M2212.5 1472.2A7.3 7.3 0 1 0 2217.8 1477.5L2213.5 1481L2209 1476.5Z" fill="none" stroke="#cccccc" stroke-width="2" stroke-linecap="round" stroke-linejoin="round" /><path d="M2252 1486.5V1477Q2252 1473 2256 1473Q2260 1473 2260 1477V1486.5Q2260 1490.5 2256 1490.5Q2252 1490.5 2252 1486.5ZM2248 1486Q2248 1494.5 2256 1494.5Q2264 1494.5 2264 1486M2256 1494.5V1499M2251.5 1499H2260.5" fill="none" stroke="#868686" stroke-width="2" stroke-linecap="round" stroke-linejoin="round" stroke-linecap="butt"/><circle cx="2307.6" cy="1486" r="12.8" fill="none" stroke="#cccccc" stroke-width="2"/><rect x="2303.8" y="1482" width="8.3" height="8.2" fill="#cccccc"/><path d="M2333 1483L2339.5 1489.5L2346 1483" fill="none" stroke="#cccccc" stroke-width="2" stroke-linecap="round" stroke-linejoin="round" /><path d="M28 1571.5L35.5 1579L28 1586.5M44 1564.5L36.5 1572L44 1579.5" fill="none" stroke="#ffffff" stroke-width="1.8" stroke-linecap="round" stroke-linejoin="round" stroke-linecap="butt"/><circle cx="99.8" cy="1576" r="11" fill="none" stroke="#cccccc" stroke-width="2"/><path d="M95 1571L104.5 1580.5M104.5 1571L95 1580.5" fill="none" stroke="#cccccc" stroke-width="2" stroke-linecap="round" stroke-linejoin="round" /><path d="M156.5 1564L168 1585.5H145Z" fill="none" stroke="#cccccc" stroke-width="2" stroke-linecap="round" stroke-linejoin="round" /><path d="M156.5 1572V1579M156.5 1582V1583" fill="none" stroke="#cccccc" stroke-width="2" stroke-linecap="round" stroke-linejoin="round" /><path d="M1985.5 1576V1569Q1985.5 1564.5 1990 1564.5H1992Q1996.5 1564.5 1996.5 1569V1571M1996.5 1569Q1996.5 1564.5 2001 1564.5H2002.5Q2007 1564.5 2007 1569V1572.5M1986 1574.5Q1990 1575.5 1996 1574" fill="none" stroke="#cccccc" stroke-width="2.2" stroke-linecap="round" stroke-linejoin="round" /><path d="M1985.5 1576Q1981.5 1578 1982 1582Q1983 1587 1993 1588.5L1992.5 1584Q1987.5 1583 1987.5 1578Z" fill="#cccccc" stroke="#cccccc" stroke-width="1" stroke-linecap="round" stroke-linejoin="round" /><circle cx="2002.2" cy="1582" r="8" fill="#cccccc"/><path d="M1998.3 1580.8Q2000.5 1577.5 2005 1579M2004.5 1577L2005.8 1579.5L2003 1580.3M2006.1 1583.2Q2003.9 1586.5 1999.4 1585M1999.9 1587L1998.6 1584.5L2001.4 1583.7" fill="none" stroke="#191919" stroke-width="1.5" stroke-linecap="round" stroke-linejoin="round" /><path d="M2049.3 1580.6A9.3 9.3 0 1 1 2062.5 1580.6M2052.2 1577.7A5.3 5.3 0 1 1 2059.6 1577.7" fill="none" stroke="#cccccc" stroke-width="2" stroke-linecap="round" stroke-linejoin="round" /><circle cx="2055.9" cy="1574" r="2.3" fill="#cccccc"/><rect x="2053.6" y="1577.5" width="4.6" height="11" rx="1" fill="#cccccc"/><circle cx="2207" cy="1576" r="11" fill="none" stroke="#cccccc" stroke-width="2"/><path d="M2199 1584L2215 1568" fill="none" stroke="#cccccc" stroke-width="2" stroke-linecap="round" stroke-linejoin="round" /><path d="M2349 1584Q2352 1578 2352 1572Q2352 1564.5 2358 1564.5Q2364 1564.5 2364 1572Q2364 1578 2367 1584ZM2355 1585Q2355 1588 2358 1588Q2361 1588 2361 1585" fill="none" stroke="#cccccc" stroke-width="2" stroke-linecap="round" stroke-linejoin="round" /><path d="M1789 1566Q1785.5 1566 1785.5 1569.5V1573.5Q1785.5 1576.2 1782.3 1576.2Q1785.5 1576.2 1785.5 1579V1583Q1785.5 1586.5 1789 1586.5M1796 1566Q1799.5 1566 1799.5 1569.5V1573.5Q1799.5 1576.2 1802.7 1576.2Q1799.5 1576.2 1799.5 1579V1583Q1799.5 1586.5 1796 1586.5" fill="none" stroke="#cccccc" stroke-width="1.7" stroke-linecap="round" stroke-linejoin="round" /></svg>
</div>
</body></html>
